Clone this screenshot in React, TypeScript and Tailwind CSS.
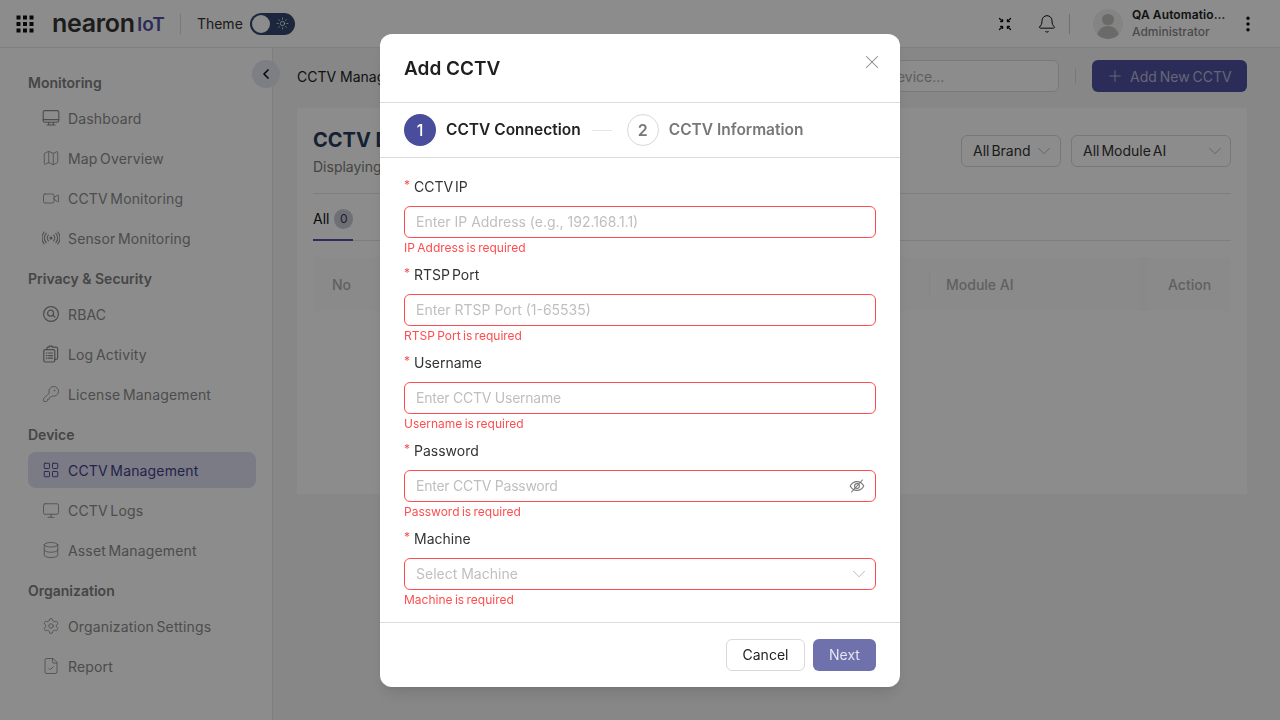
import { Bell, ChevronDown, ChevronLeft, Database, EllipsisVertical, FileCheck, KeyRound, LayoutGrid, Map, Monitor, Plus, Settings, Sun, Video, X } from "lucide-react";
import type { ReactNode } from "react";

function GridIcon() {
    return (
        <svg width="18" height="18" viewBox="0 0 18 18" fill="#111">
            {[0, 6.5, 13].map((y) =>
                [0, 6.5, 13].map((x) => <rect key={`${x}-${y}`} x={x + 0.5} y={y + 0.5} width="4" height="4" />)
            )}
        </svg>
    );
}

function DashboardIcon() {
    return (
        <svg width="18" height="18" viewBox="0 0 18 18" fill="none" stroke="currentColor" strokeWidth="1.1" strokeLinecap="round" strokeLinejoin="round">
            <rect x="1.2" y="1.6" width="15.6" height="11.6" rx="1.6" />
            <path d="M1.2 10.6h15.6M7 13.2l-.5 2.6M11 13.2l.5 2.6M5 16h8" />
        </svg>
    );
}

function SensorIcon() {
    return (
        <svg width="18" height="18" viewBox="0 0 18 18" fill="none" stroke="currentColor" strokeWidth="1.1" strokeLinecap="round">
            <circle cx="9" cy="9" r="1" fill="currentColor" />
            <path d="M6.4 6.2a4 4 0 0 0 0 5.6M11.6 6.2a4 4 0 0 1 0 5.6" />
            <path d="M4.2 4.4a6.6 6.6 0 0 0 0 9.2M13.8 4.4a6.6 6.6 0 0 1 0 9.2" />
            <path d="M2.2 3a9.2 9.2 0 0 0 0 12M15.8 3a9.2 9.2 0 0 1 0 12" />
        </svg>
    );
}

function RbacIcon() {
    return (
        <svg width="18" height="18" viewBox="0 0 18 18" fill="none" stroke="currentColor" strokeWidth="1.2" strokeLinecap="round">
            <circle cx="9" cy="9" r="7.4" />
            <circle cx="8.6" cy="8.2" r="3" />
            <path d="M11 10.4l2 1.6" />
        </svg>
    );
}

function LogIcon() {
    return (
        <svg width="18" height="18" viewBox="0 0 18 18" fill="none" stroke="currentColor" strokeWidth="1.2" strokeLinecap="round" strokeLinejoin="round">
            <rect x="1.8" y="4.6" width="11" height="12.4" rx="1.4" />
            <path d="M5 4.6V3.2a1 1 0 0 1 1-1h1.2V1.2h3V2.2h3.6A1.6 1.6 0 0 1 15.6 3.8V13a1.5 1.5 0 0 1-1.5 1.4h-1.3" />
            <path d="M4.4 8h.6M6.6 8h3.8M4.4 10.6h.6M6.6 10.6h3.8M4.4 13.2h.6M6.6 13.2h3.8" />
        </svg>
    );
}

function ShrinkIcon() {
    return (
        <svg width="14" height="14" viewBox="0 0 14 14" fill="none" stroke="#111" strokeWidth="1.3" strokeLinecap="round" strokeLinejoin="round">
            <path d="M1.5 1.5l3 3M4.6 2.6v2h-2M12.5 1.5l-3 3M9.4 2.6v2h2M1.5 12.5l3-3M4.6 11.4v-2h-2M12.5 12.5l-3-3M9.4 11.4v-2h2" />
        </svg>
    );
}

function EyeSlashIcon() {
    return (
        <svg width="16" height="16" viewBox="0 0 16 16" fill="none" stroke="#777" strokeWidth="1.1" strokeLinecap="round" strokeLinejoin="round">
            <path d="M1.2 8c1.6-3 4-4.4 6.8-4.4S13.200 5 14.800 8c-1.600 3-4 4.400-6.800 4.400S2.800 11 1.200 8z" />
            <circle cx="8" cy="8" r="2.400" />
            <path d="M13.400 2L2.600 14" />
        </svg>
    );
}

function Avatar() {
    return (
        <div className="w-[30px] h-[30px] rounded-full bg-[#f0f0f0] overflow-hidden flex flex-col items-center shrink-0">
            <div className="w-[12px] h-[12px] rounded-full bg-[#c2c1bd] mt-[5px]" />
            <div className="w-[22px] h-[14px] rounded-t-full bg-[#c2c1bd] mt-[1px]" />
        </div>
    );
}

const menu: { title: string; items: { label: string; icon: ReactNode; active?: boolean }[] }[] = [
    {
        title: "Monitoring",
        items: [
            { label: "Dashboard", icon: <DashboardIcon /> },
            { label: "Map Overview", icon: <Map size={20} strokeWidth={1.1} /> },
            { label: "CCTV Monitoring", icon: <Video size={21} strokeWidth={1.1} /> },
            { label: "Sensor Monitoring", icon: <SensorIcon /> },
        ],
    },
    {
        title: "Privacy & Security",
        items: [
            { label: "RBAC", icon: <RbacIcon /> },
            { label: "Log Activity", icon: <LogIcon /> },
            { label: "License Management", icon: <KeyRound size={20} strokeWidth={1.1} /> },
        ],
    },
    {
        title: "Device",
        items: [
            { label: "CCTV Management", icon: <LayoutGrid size={20} strokeWidth={1.2} />, active: true },
            { label: "CCTV Logs", icon: <Monitor size={21} strokeWidth={1.1} /> },
            { label: "Asset Management", icon: <Database size={20} strokeWidth={1.1} /> },
        ],
    },
    {
        title: "Organization",
        items: [
            { label: "Organization Settings", icon: <Settings size={20} strokeWidth={1.1} /> },
            { label: "Report", icon: <FileCheck size={20} strokeWidth={1.1} /> },
        ],
    },
];

const fields = [
    { label: "CCTV IP", placeholder: "Enter IP Address (e.g., 192.168.1.1)", error: "IP Address is required" },
    { label: "RTSP Port", placeholder: "Enter RTSP Port (1-65535)", error: "RTSP Port is required" },
    { label: "Username", placeholder: "Enter CCTV Username", error: "Username is required", tight: true },
    { label: "Password", placeholder: "Enter CCTV Password", error: "Password is required", tight: true, icon: <EyeSlashIcon /> },
    { label: "Machine", placeholder: "Select Machine", error: "Machine is required", icon: <ChevronDown size={22} strokeWidth={0.9} className="text-[#aaa] mr-[-5px]" /> },
];

function Sidebar() {
    return (
        <aside className="w-[273px] shrink-0 border-r border-[#e6e6e6] pt-6 pl-7 pr-4 bg-white relative">
            {menu.map((section) => (
                <div key={section.title} className="mb-3">
                    <div className="h-[22px] leading-[22px] text-sm font-semibold text-[#808080] mb-1.5">{section.title}</div>
                    <div className="flex flex-col gap-1">
                        {section.items.map((item) => (
                            <div
                                key={item.label}
                                className={`h-9 rounded-lg flex items-center gap-2 pl-[14px] text-sm tracking-[0.15px] [word-spacing:-1.5px] ${item.active ? "bg-[#e0e0f2] text-[#3f418c]" : "text-[#8c8c8c]"}`}
                            >
                                <span className="w-[18px] flex justify-center shrink-0">{item.icon}</span>
                                <span className="pt-0.5">{item.label}</span>
                            </div>
                        ))}
                    </div>
                </div>
            ))}
            <button className="absolute top-3 right-[-8px] w-7 h-7 rounded-full bg-[#e4e8f0] flex items-center justify-center text-[#111]">
                <ChevronLeft size={16} strokeWidth={2.6} />
            </button>
        </aside>
    );
}

function Background() {
    return (
        <div className="h-screen w-full flex flex-col overflow-hidden bg-[#f6f6f6] text-[#222]">
            <header className="h-12 shrink-0 bg-white border-b border-[#e8e8e8] flex items-center pl-[16px] pr-[22px]">
                <GridIcon />
                <span className="ml-[18px] w-[85px] text-[25px] font-semibold tracking-[-0.3px] leading-none text-[#333]">nearon</span>
                <span className="text-[19px] font-semibold leading-none text-[#4f519f] pt-0.5">IoT</span>
                <div className="w-px h-5 bg-[#ddd] ml-[15px]" />
                <span className="ml-4 text-sm text-[#333]">Theme</span>
                <div className="ml-[7px] w-[45px] h-[22px] rounded-full bg-[#33466e] flex items-center pl-0.5 gap-[6px]">
                    <div className="w-[18px] h-[18px] rounded-full bg-white" />
                    <Sun size={13} strokeWidth={1.4} className="text-white" />
                </div>
                <div className="flex-1" />
                <ShrinkIcon />
                <Bell size={20} strokeWidth={1.2} className="ml-[25px] text-[#111]" />
                <div className="w-px h-5 bg-[#ccc] ml-[12px]" />
                <div className="ml-[23px]"><Avatar /></div>
                <div className="ml-[9px] w-[94px] leading-[16px]">
                    <div className="text-xs font-semibold text-[#222] truncate tracking-[0.1px] pb-px">QA Automation User</div>
                    <div className="text-xs font-medium text-[#888]">Administrator</div>
                </div>
                <EllipsisVertical size={20} strokeWidth={2.2} className="ml-3 text-[#111]" />
            </header>
            <div className="flex flex-1 min-h-0">
                <Sidebar />
                <main className="flex-1 pl-6 pr-[33px] pt-3">
                    <div className="flex items-center h-8">
                        <span className="text-sm text-[#222] pt-0.5">CCTV Management</span>
                        <div className="flex-1" />
                        <div className="w-[260px] h-8 border border-[#ddd] rounded-md bg-white flex items-center pl-[38px] pt-0.5 text-sm text-[#aaa]">Search device...</div>
                        <div className="w-px h-4 bg-[#ddd] mx-4" />
                        <button className="w-[155px] h-8 rounded-md bg-[#4f519f] text-[#b9bad8] text-sm flex items-center pl-[14px] gap-1.5 [word-spacing:-1px]">
                            <Plus size={18} strokeWidth={1.4} />
                            <span className="pt-0.5">Add New CCTV</span>
                        </button>
                    </div>
                    <section className="mt-4 h-[386px] bg-white p-4">
                        <div className="flex items-start justify-between h-[70px] border-b border-[#e6e6e6]">
                            <div className="pt-0.5">
                                <div className="text-xl font-bold leading-7 text-[#2a3a5e]">CCTV Device</div>
                                <div className="text-sm leading-5 mt-[3px] text-[#7d7d7d]">Displaying all devices</div>
                            </div>
                            <div className="flex gap-2.5 mt-[11px]">
                                <div className="w-[100px] h-8 border border-[#d9d9d9] rounded-md flex items-center justify-between pl-[11px] pr-[5px] text-sm text-[#333] [word-spacing:-2px]">
                                    All Brand
                                    <ChevronDown size={22} strokeWidth={0.9} className="text-[#aaa]" />
                                </div>
                                <div className="w-[160px] h-8 border border-[#d9d9d9] rounded-md flex items-center justify-between pl-[11px] pr-1 text-sm text-[#333] [word-spacing:-2px]">
                                    All Module AI
                                    <ChevronDown size={22} strokeWidth={0.9} className="text-[#aaa]" />
                                </div>
                            </div>
                        </div>
                        <div className="h-[47px] border-b border-[#e6e6e6] flex items-end">
                            <div className="w-10 h-[47px] border-b-2 border-[#4f519f] mb-[-1px] pt-1 flex items-center gap-[5px] text-sm text-[#111]">
                                All
                                <span className="w-5 h-5 rounded-full bg-[#c9cdd6] text-[#2a3a5e] text-xs flex items-center justify-center">0</span>
                            </div>
                        </div>
                        <div className="mt-4 h-[54px] flex items-center bg-[#fbfbfb] text-sm font-medium text-[#b0b0b0]">
                            <div className="w-[60px] pl-[19px] pt-0.5">No</div>
                            <div className="flex-1" />
                            <div className="w-[211px] pl-4 pt-0.5 border-l border-[#f2f2f2] leading-6">Module AI</div>
                            <div className="w-[91px] h-full pl-[28px] pt-0.5 flex items-center bg-gradient-to-r from-[#f8f8f8] to-[#fbfbfb] to-[9px]">Action</div>
                        </div>
                    </section>
                </main>
            </div>
        </div>
    );
}

function Modal() {
    return (
        <div className="w-[520px] h-[653px] bg-white rounded-xl shadow-lg flex flex-col text-[#222]">
            <div className="h-[69px] shrink-0 px-6 flex items-center justify-between border-b border-[#dcdcdc]">
                <h2 className="text-[19px] font-semibold text-[#1f1f1f] pt-0.5">Add CCTV</h2>
                <X size={22} strokeWidth={1.1} className="text-[#888] mb-[12px] mr-[-7px]" />
            </div>
            <div className="h-[55px] shrink-0 px-6 flex items-center border-b border-[#dcdcdc]">
                <span className="w-8 h-8 rounded-full bg-[#4a4c9c] text-white flex items-center justify-center font-medium">1</span>
                <span className="ml-2.5 text-[15.5px] font-semibold text-[#222]">CCTV Connection</span>
                <span className="w-5 h-px bg-[#e6e6e6] ml-[11px]" />
                <span className="ml-[15px] w-8 h-8 rounded-full border border-[#d9d9d9] text-[#777] flex items-center justify-center font-semibold">2</span>
                <span className="ml-2.5 text-[15.5px] font-semibold text-[#777]">CCTV Information</span>
            </div>
            <form className="flex-1 px-6 pt-4">
                {fields.map((field) => (
                    <div key={field.label} className="h-[88px]">
                        <div className="h-6 pt-0.5 flex items-center text-sm text-[#333] [word-spacing:-2px]">
                            <span className="text-[#ff4d4f] text-xs mr-1 mb-1">*</span>
                            {field.label}
                        </div>
                        <div className="mt-2 h-8 border border-[#ff4d4f] rounded-md flex items-center justify-between pl-[11px] pr-2.5">
                            <span className={`text-sm text-[#bfbfbf] ${field.tight ? "tracking-[-0.25px]" : ""}`}>{field.placeholder}</span>
                            {field.icon}
                        </div>
                        <div className="text-xs leading-5 text-[#ff4d4f] [word-spacing:-1px]">{field.error}</div>
                    </div>
                ))}
            </form>
            <div className="h-[65px] shrink-0 border-t border-[#dcdcdc] px-6 flex items-center justify-end gap-2">
                <button className="w-[79px] h-8 rounded-md border border-[#d9d9d9] text-sm text-[#222]">Cancel</button>
                <button className="w-[63px] h-8 rounded-md bg-[#6e71ab] text-sm text-[#e6e6f2]">Next</button>
            </div>
        </div>
    );
}

export default function App() {
    return (
        <div className="relative h-screen w-full overflow-hidden font-['Inter',sans-serif]">
            <Background />
            <div className="fixed inset-0 bg-black/45 flex justify-center pt-[34px]">
                <Modal />
            </div>
        </div>
    );
}
